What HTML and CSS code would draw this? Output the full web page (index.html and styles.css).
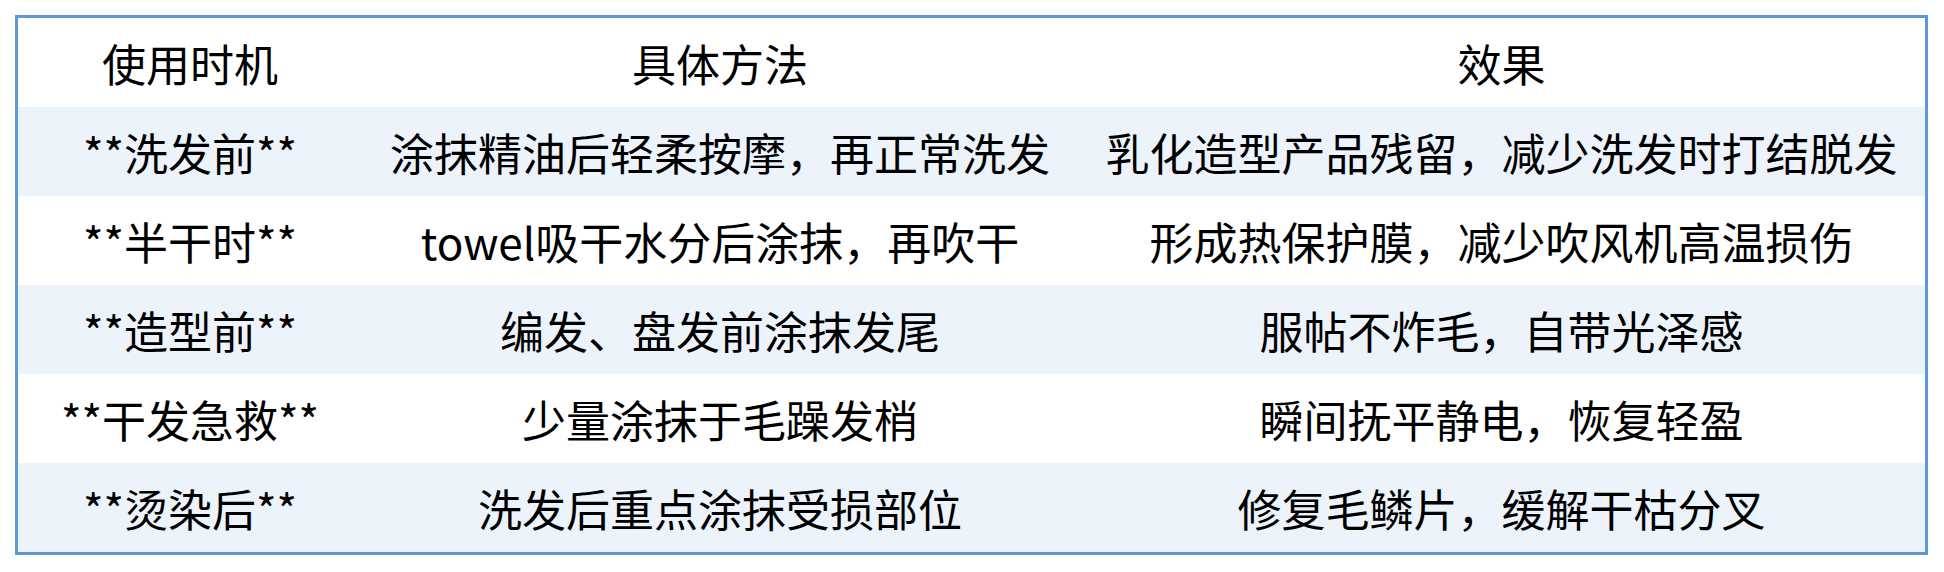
FILE: index.html
```html
<!DOCTYPE html>
<html lang="zh">
<head>
<meta charset="utf-8">
<title>使用时机</title>
<link rel="stylesheet" href="styles.css">
</head>
<body>
<table class="tips">
  <colgroup>
    <col class="c1">
    <col class="c2">
    <col class="c3">
  </colgroup>
  <thead>
    <tr><th>使用时机</th><th>具体方法</th><th>效果</th></tr>
  </thead>
  <tbody>
    <tr><td>**洗发前**</td><td>涂抹精油后轻柔按摩，再正常洗发</td><td>乳化造型产品残留，减少洗发时打结脱发</td></tr>
    <tr><td>**半干时**</td><td>towel吸干水分后涂抹，再吹干</td><td>形成热保护膜，减少吹风机高温损伤</td></tr>
    <tr><td>**造型前**</td><td>编发、盘发前涂抹发尾</td><td>服帖不炸毛，自带光泽感</td></tr>
    <tr><td>**干发急救**</td><td>少量涂抹于毛躁发梢</td><td>瞬间抚平静电，恢复轻盈</td></tr>
    <tr><td>**烫染后**</td><td>洗发后重点涂抹受损部位</td><td>修复毛鳞片，缓解干枯分叉</td></tr>
  </tbody>
</table>
</body>
</html>
```
FILE: styles.css
```css
html, body {
  margin: 0;
  padding: 0;
  background: #ffffff;
}
body {
  padding: 15px;
  font-family: "Noto Sans CJK SC", "Microsoft YaHei", sans-serif;
  color: #000000;
}
.tips {
  width: 1913px;
  border: 3px solid #5b9bd5;
  border-collapse: separate;
  border-spacing: 0;
  table-layout: fixed;
}
.c1 { width: 344px; }
.c2 { width: 716px; }
.c3 { width: 847px; }
.tips th,
.tips td {
  height: 89px;
  padding: 0;
  text-align: center;
  vertical-align: middle;
  font-size: 44px;
  font-weight: 400;
  line-height: 1;
  white-space: nowrap;
}
.tips tbody tr:nth-child(odd) {
  background: #ecf3fb;
}
```
